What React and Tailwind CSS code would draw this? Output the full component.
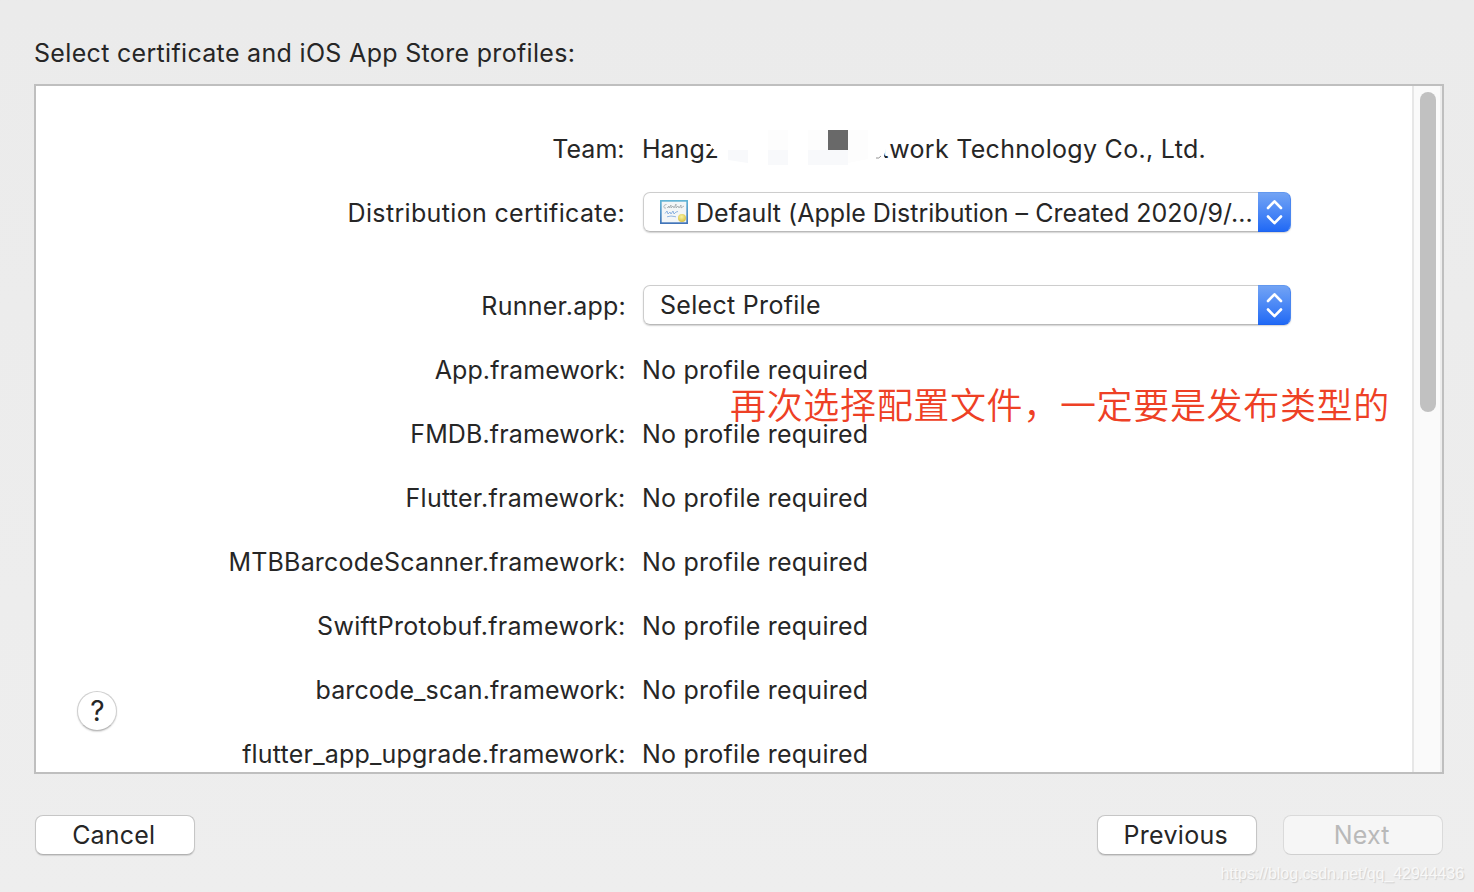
import React from "react";

const frameworks = [
  { name: "App.framework:", tracking: "tracking-[0.1px]" },
  { name: "FMDB.framework:", tracking: "tracking-[0.13px]" },
  { name: "Flutter.framework:", tracking: "tracking-[0.27px]" },
  { name: "MTBBarcodeScanner.framework:", tracking: "tracking-[0.19px]" },
  { name: "SwiftProtobuf.framework:", tracking: "tracking-[0.29px]" },
  { name: "barcode_scan.framework:", tracking: "tracking-[0.12px]" },
  { name: "flutter_app_upgrade.framework:", tracking: "tracking-[0.2px]" },
];

function Row({ label, tracking = "", height = "h-16", children }) {
  return (
    <div className={`flex shrink-0 items-center ${height}`}>
      <div className={`w-[590px] shrink-0 text-right ${tracking}`}>{label}</div>
      <div className="ml-[17px] flex items-center">{children}</div>
    </div>
  );
}

function Popup({ children }) {
  return (
    <div className="flex h-10 w-[648px] rounded-[7px] shadow-[0_1px_1.5px_rgba(0,0,0,0.18)]">
      <div className="flex min-w-0 flex-1 items-center rounded-l-[7px] border border-r-0 border-[#cdcdcd] border-b-[#b9b9b9] bg-white pl-4">
        {children}
      </div>
      <div className="flex w-[33px] items-center justify-center rounded-r-[7px] border border-l-0 border-t-[#6298ef] border-r-[#4a86f0] border-b-[#1e63ee] bg-linear-to-b from-[#72a3f4] to-[#2069f5]">
        <svg width="32" height="38" viewBox="0 0 32 38" fill="none" stroke="#fff" strokeWidth="2.6" strokeLinecap="round" strokeLinejoin="round">
          <path d="M10 15 L16.5 8.3 L23 15 M10 23.5 L16.5 30.2 L23 23.5" />
        </svg>
      </div>
    </div>
  );
}

function CertificateIcon() {
  return (
    <svg className="shrink-0" width="28" height="24" viewBox="0 0 28 24">
      <defs>
        <linearGradient id="frame" x1="0" y1="0" x2="0" y2="1">
          <stop offset="0" stopColor="#63b6d6" />
          <stop offset="1" stopColor="#4173b8" />
        </linearGradient>
        <radialGradient id="seal" cx="0.45" cy="0.35" r="0.7">
          <stop offset="0" stopColor="#f8f3a0" />
          <stop offset="1" stopColor="#d5bd3c" />
        </radialGradient>
      </defs>
      <rect width="28" height="24" fill="url(#frame)" />
      <rect x="1.7" y="1.7" width="24.6" height="20.6" fill="#f3f6f7" />
      <path d="M6.5 4.5 C3 4.5 3 9 6 8 M7 8 L9 6 L9 8 L11 5 L11 8 L13 6 L14 8 L16 4 L16 8 L18 6 L19 8 L21 5 L21 8 L24 6" fill="none" stroke="#959da0" strokeWidth="0.7" />
      <path d="M5 13.5 L7 11 L8 14 L10 12 L11 14 L13 11 L14 14 L16 12 L18 11.5 M7 16.8 L11 16 L16 16.8" fill="none" stroke="#78a6dc" strokeWidth="0.8" />
      <circle cx="22" cy="18" r="4" fill="url(#seal)" />
    </svg>
  );
}

function Button({ children, className }) {
  return (
    <button className={`flex h-10 w-40 items-center justify-center rounded-[8px] border pr-[2.5px] ${className}`}>
      {children}
    </button>
  );
}

export default function App() {
  return (
    <div className="relative flex h-[892px] w-[1474px] flex-col overflow-hidden bg-linear-to-b from-[#ebebeb] to-[#eeeeee] font-['Inter','Noto_Sans_CJK_SC',sans-serif] text-[25px] leading-8 whitespace-nowrap text-[#262626]">
      <div className="ml-[34px] h-[84px] shrink-0 pt-[37px]">
        <span className="tracking-[0.32px]">Select certificate and iOS App Store profiles:</span>
      </div>
      <div className="relative ml-[34px] flex h-[690px] w-[1410px] shrink-0 border-2 border-[#bfbfbf] bg-white">
        <div className="flex flex-1 flex-col overflow-hidden pt-[31px]">
          <Row label={<span className="mr-[1.5px]">Team:</span>}>
            <div className="relative -ml-px flex w-[564px] justify-between">
              <span>Hangz</span>
              <span className="tracking-[0.3px]">twork Technology Co., Ltd.</span>
              <svg className="absolute -top-[4px] left-[64px]" width="184" height="37" viewBox="0 0 184 37">
                <path d="M3 0 H183 V20 L180 20 L178 27 L180 31 L160 33 L146 37 H20 V30 H14 L12 22 L7 20 L2 12 Z" fill="#fff" />
                <path d="M22 21 H42 V34 L22 31 Z M62 21 H82 V36 H62 Z M102 21 H142 V36 H102 Z" fill="#f8f9fb" />
                <path d="M62 1 H82 V21 H62 Z M102 1 H122 V21 H102 Z M142 1 H162 V30 L142 34 Z" fill="#fdfdfd" />
                <path d="M122 1 H142 V21 H122 Z" fill="#696969" />
                <path d="M170 29 Q173 30 175 27" stroke="#777" strokeWidth="0.8" fill="none" />
              </svg>
            </div>
          </Row>
          <Row label={<span className="relative top-px mr-px tracking-[0.34px]">Distribution certificate:</span>} height="h-[62px]">
            <Popup>
              <CertificateIcon />
              <span className="ml-2 pt-px tracking-[0.02px]">Default (Apple Distribution – Created 2020/9/...</span>
            </Popup>
          </Row>
          <div className="h-[30px] shrink-0" />
          <Row label={<span className="relative top-px">Runner.app:</span>} tracking="tracking-[0.25px]">
            <Popup>
              <span className="tracking-[0.3px]">Select Profile</span>
            </Popup>
          </Row>
          <div className="h-px shrink-0" />
          {frameworks.map((f) => (
            <Row key={f.name} label={<span className="mr-[0.4px]">{f.name}</span>} tracking={f.tracking}>
              <span className="-ml-px tracking-[0.24px]">No profile required</span>
            </Row>
          ))}
        </div>
        <div className="flex w-[30px] shrink-0 border-x-2 border-l-[#e7e7e7] border-r-[#ededed] bg-[#fafafa] pt-[6px] pl-[6px]">
          <div className="h-80 w-4 rounded-full bg-[#c1c1c1]" />
        </div>
        <button className="absolute top-[605px] left-[41px] flex size-10 items-center justify-center rounded-full border border-[#cfcfcf] border-b-[#b9b9b9] bg-white pl-px text-[28px] shadow-[0_1px_1.5px_rgba(0,0,0,0.15)]">
          ?
        </button>
        <div className="absolute top-[291px] left-[694px] font-['Noto_Sans_CJK_SC',sans-serif] text-[36px] leading-[52px] font-[350] tracking-[0.66px] text-[#ee4025]">
          再次选择配置文件，一定要是发布类型的
        </div>
      </div>
      <div className="mt-[41px] ml-[35px] flex w-[1408px]">
        <Button className="border-[#c6c6c6] border-b-[#b2b2b2] bg-white tracking-[0.2px] shadow-[0_1px_1px_rgba(0,0,0,0.12)]">Cancel</Button>
        <Button className="mr-[26px] ml-auto border-[#c6c6c6] border-b-[#b2b2b2] bg-white tracking-[0.3px] shadow-[0_1px_1px_rgba(0,0,0,0.12)]">Previous</Button>
        <Button className="border-[#dadada] border-b-[#d0d0d0] bg-[#f6f6f6] tracking-[0.2px] text-[#b9b9b9]">Next</Button>
      </div>
      <div className="absolute right-[10px] bottom-[8px] font-['Liberation_Sans',sans-serif] text-[16px] leading-5 tracking-[-0.06px] text-[#f8f8f8] [text-shadow:1px_1px_1px_#cecece]">
        https://blog.csdn.net/qq_42944436
      </div>
    </div>
  );
}
